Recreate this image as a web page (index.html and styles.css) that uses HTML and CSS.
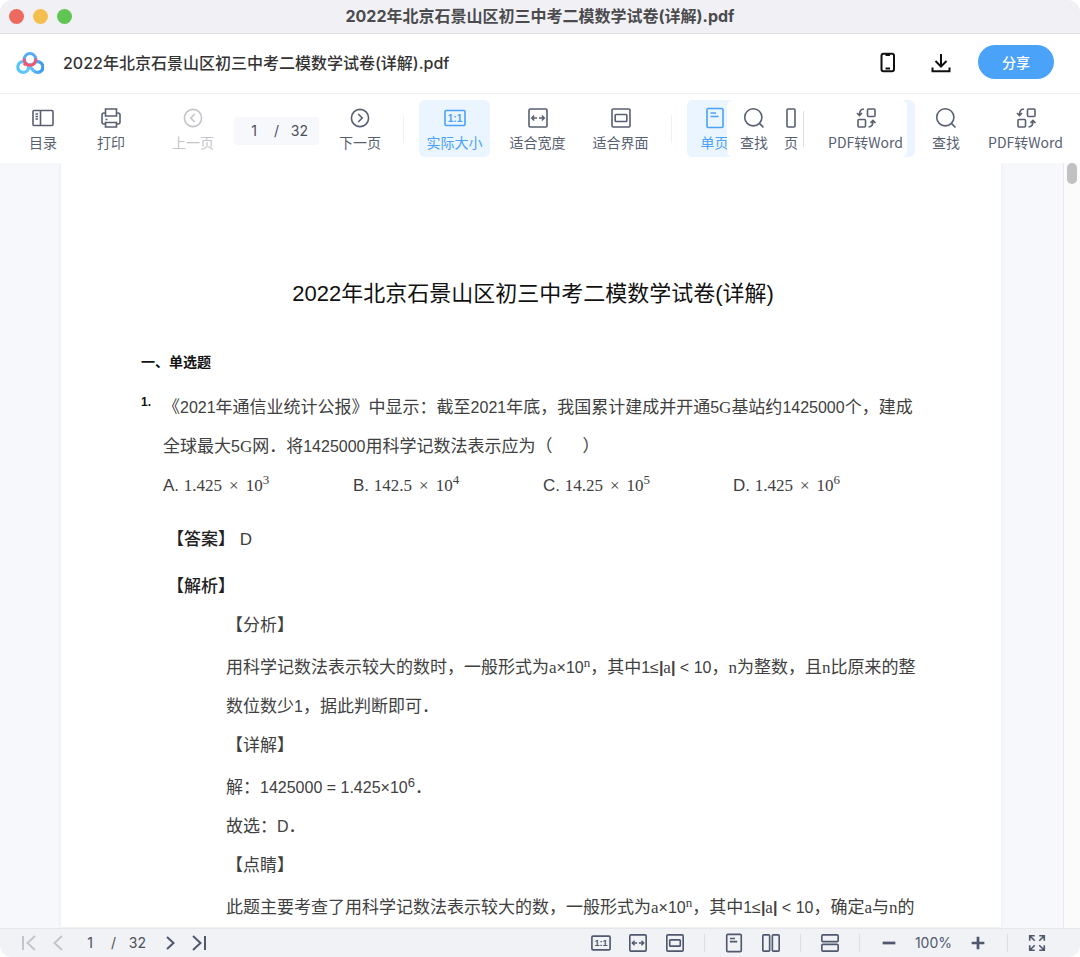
FILE: index.html
```html
<!DOCTYPE html>
<html lang="zh-CN">
<head>
	<meta charset="utf-8">
	<title>2022年北京石景山区初三中考二模数学试卷(详解).pdf</title>
	<link rel="stylesheet" href="styles.css">
</head>
<body>
<svg class="sprite" aria-hidden="true">
	<symbol id="fit-width" viewBox="0 0 22 22">
		<rect x="2" y="2" width="18" height="18" rx="1.2"/>
		<path d="M5 11h5M12 11h5M7.200 8.500 4.700 11l2.500 2.500M14.800 8.500 17.300 11l-2.500 2.500" stroke-width="1.5"/>
	</symbol>
	<symbol id="fit-page" viewBox="0 0 22 22">
		<rect x="2" y="2" width="18" height="18" rx="1.2"/>
		<rect x="5.200" y="7.500" width="11.600" height="7" rx="0.8"/>
	</symbol>
	<symbol id="single" viewBox="0 0 22 22">
		<rect x="3" y="1.500" width="16" height="19" rx="1.2"/>
		<path d="M6.500 6h5.500M6.500 9.500h8"/>
	</symbol>
	<symbol id="double" viewBox="0 0 22 22">
		<rect x="2" y="2" width="7.500" height="18" rx="1"/>
		<rect x="12.500" y="2" width="7.500" height="18" rx="1"/>
	</symbol>
	<symbol id="search" viewBox="0 0 22 22">
		<circle cx="10.300" cy="10.300" r="8.600"/>
		<path d="M16.400 16.400 20.500 20.500"/>
	</symbol>
	<symbol id="convert" viewBox="0 0 22 22">
		<rect x="12.500" y="2" width="7.500" height="7.500" rx="1"/>
		<rect x="3" y="12.500" width="7.500" height="7.500" rx="1"/>
		<path d="M9 2C6 2 4.500 4 4.500 8M2 6l2.500 2.600L7 6M13.500 20c3.500 0 4.500-2 4.500-6M15.500 16l2.500-2.600L20.500 16"/>
	</symbol>
</svg>
<div class="window">
	<div class="title-bar">
		<div class="lights">
			<button class="light red" aria-label="关闭"></button>
			<button class="light yellow" aria-label="最小化"></button>
			<button class="light green" aria-label="最大化"></button>
		</div>
		<div class="window-title">2022年北京石景山区初三中考二模数学试卷(详解).pdf</div>
	</div>
	<header class="header">
		<svg class="logo" viewBox="0 0 28 24">
			<defs>
				<linearGradient id="ring-left" x1="0" x2="1">
					<stop offset="0" stop-color="#5ac3f8"/>
					<stop offset="1" stop-color="#62c8fb"/>
				</linearGradient>
				<linearGradient id="ring-right" x1="0" x2="1">
					<stop offset="0" stop-color="#69c9fb"/>
					<stop offset="1" stop-color="#3798f5"/>
				</linearGradient>
			</defs>
			<circle cx="7.200" cy="16" r="5.400" fill="none" stroke="url(#ring-left)" stroke-width="3.200"/>
			<path d="M17.500 12.400a5.400 5.400 0 1 1 .2 7.500L12.800 14.500" fill="none" stroke="url(#ring-right)" stroke-width="3.200"/>
			<circle cx="14" cy="8.300" r="5.800" fill="#fff" stroke="#55adf9" stroke-width="3"/>
			<path d="M8.300 7.500a5.800 5.800 0 1 0 11.400 0" fill="none" stroke="#ee5672" stroke-width="3"/>
			<path d="M10 12 8 14.200" stroke="#ee5672" stroke-width="3"/>
		</svg>
		<h1 class="file-name">2022年北京石景山区初三中考二模数学试卷(详解).pdf</h1>
		<button class="head-btn" aria-label="手机">
			<svg viewBox="0 0 22 22"><rect x="4.500" y="1.800" width="12.500" height="17.500" rx="2"/><path d="M8.500 3h4.500M8.500 16.500h4.500"/></svg>
		</button>
		<button class="head-btn" aria-label="下载">
			<svg viewBox="0 0 22 22"><path d="M11 2v12M5.500 9l5.500 5.500L16.500 9M2.500 15.500v3.700h17v-3.700"/></svg>
		</button>
		<button class="share">分享</button>
	</header>
	<nav class="toolbar">
		<button class="tool contents">
			<svg class="icon" viewBox="0 0 22 22"><rect x="1" y="3.500" width="20" height="15" rx="1"/><path d="M8.500 3.500v15M3.500 7h2.500M3.500 9.500h2.500M3.500 12h2.500"/></svg>
			<span>目录</span>
		</button>
		<button class="tool print">
			<svg class="icon" viewBox="0 0 22 22"><path d="M5.500 9V2h11v7zM5.500 6H4a2 2 0 0 0-2 2v7a2 2 0 0 0 2 2h1.500M16.500 6H18a2 2 0 0 1 2 2v7a2 2 0 0 1-2 2h-1.500M5.500 15.500h11V20h-11zM5.500 12.500h2"/></svg>
			<span>打印</span>
		</button>
		<button class="tool turn" disabled>
			<svg class="icon" viewBox="0 0 22 22"><circle cx="11" cy="11" r="8.600"/><path d="M12.800 7 8.800 11l4 4"/></svg>
			<span>上一页</span>
		</button>
		<div class="pager">
			<input type="text" value="1" aria-label="页码"><span>/</span><span>32</span>
		</div>
		<button class="tool turn">
			<svg class="icon" viewBox="0 0 22 22"><circle cx="11" cy="11" r="8.600"/><path d="M9.200 7l4 4-4 4"/></svg>
			<span>下一页</span>
		</button>
		<i class="line"></i>
		<button class="tool zoom active"><svg class="icon" viewBox="0 0 22 22"><rect x="1" y="3.500" width="20" height="15" rx="1.2"/><text x="11" y="14.500">1:1</text></svg><span>实际大小</span></button>
		<button class="tool zoom"><svg class="icon"><use href="#fit-width"/></svg><span>适合宽度</span></button>
		<button class="tool zoom"><svg class="icon"><use href="#fit-page"/></svg><span>适合界面</span></button>
		<i class="line"></i>
		<div class="modes">
			<div class="mode-clip">
				<button class="tool mode active"><svg class="icon"><use href="#single"/></svg><span>单页</span></button>
			</div>
			<div class="mode-panel">
				<button class="tool"><svg class="icon"><use href="#search"/></svg><span>查找</span></button>
				<button class="tool cut" aria-label="双页"><svg class="icon" viewBox="0 0 10 22"><rect x="1" y="2" width="8" height="18" rx="1"/></svg><span>页</span></button>
				<i class="line dark"></i>
				<button class="tool"><svg class="icon"><use href="#convert"/></svg><span>PDF转Word</span></button>
			</div>
		</div>
		<button class="tool find"><svg class="icon"><use href="#search"/></svg><span>查找</span></button>
		<button class="tool"><svg class="icon"><use href="#convert"/></svg><span>PDF转Word</span></button>
	</nav>
	<main class="viewer">
		<article class="paper">
			<h2>2022年北京石景山区初三中考二模数学试卷(详解)</h2>
			<h3>一、单选题</h3>
			<div class="question">
				<b class="number">1.</b>
				<div class="stem">
					<p>《<span class="num">2021</span>年通信业统计公报》中显示：截至<span class="num">2021</span>年底，我国累计建成并开通<span class="num">5<span class="serif">G</span></span>基站约<span class="num">1425000</span>个，建成<br>全球最大<span class="num">5<span class="serif">G</span></span>网．将<span class="num">1425000</span>用科学记数法表示应为（<span class="blank"></span>）</p>
					<ul class="options">
						<li>A. <span class="math">1.425<i>×</i>10<sup>3</sup></span></li>
						<li>B. <span class="math">142.5<i>×</i>10<sup>4</sup></span></li>
						<li>C. <span class="math">14.25<i>×</i>10<sup>5</sup></span></li>
						<li>D. <span class="math">1.425<i>×</i>10<sup>6</sup></span></li>
					</ul>
				</div>
			</div>
			<p class="answer"><strong>【答案】</strong> D</p>
			<p class="answer"><strong>【解析】</strong></p>
			<div class="analysis">
				<p>【分析】</p>
				<p class="power">用科学记数法表示较大的数时，一般形式为<span class="num"><span class="serif">a</span>×10<sup class="serif">n</sup></span>，其中<span class="num">1≤<b>|</b><span class="serif">a</span><b>|</b> &lt; 10</span>，<span class="serif">n</span>为整数，且<span class="serif">n</span>比原来的整<br>数位数少<span class="num">1</span>，据此判断即可．</p>
				<p>【详解】</p>
				<p class="power">解：<span class="num">1425000 = 1.425×10<sup>6</sup></span>．</p>
				<p>故选：<span class="num">D</span>．</p>
				<p>【点睛】</p>
				<p class="power">此题主要考查了用科学记数法表示较大的数，一般形式为<span class="num"><span class="serif">a</span>×10<sup class="serif">n</sup></span>，其中<span class="num">1≤<b>|</b><span class="serif">a</span><b>|</b> &lt; 10</span>，确定<span class="serif">a</span>与<span class="serif">n</span>的</p>
			</div>
		</article>
		<div class="scroll"><div class="thumb"></div></div>
	</main>
	<footer class="status">
		<button class="step" aria-label="第一页" disabled><svg viewBox="0 0 16 16"><path d="M2 1v14M14 1 6.500 8l7.500 7"/></svg></button>
		<button class="step" aria-label="上一页" disabled><svg viewBox="0 0 16 16"><path d="M12 1 4.500 8l7.500 7"/></svg></button>
		<div class="pager small">
			<input type="text" value="1" aria-label="当前页"><span>/</span><span>32</span>
		</div>
		<button class="step" aria-label="下一页"><svg viewBox="0 0 16 16"><path d="M5 2l6.500 6L5 14"/></svg></button>
		<button class="step" aria-label="最后一页"><svg viewBox="0 0 16 16"><path d="M14 1v14M2 1l7.500 7L2 15"/></svg></button>
		<div class="views">
			<button aria-label="实际大小"><svg viewBox="0 0 22 22"><rect x="1" y="3.500" width="20" height="15" rx="1.2"/><text x="11" y="14.500">1:1</text></svg></button>
			<button aria-label="适合宽度"><svg><use href="#fit-width"/></svg></button>
			<button aria-label="适合界面"><svg><use href="#fit-page"/></svg></button>
			<i class="line dark"></i>
			<button aria-label="单页"><svg><use href="#single"/></svg></button>
			<button aria-label="双页"><svg><use href="#double"/></svg></button>
			<i class="line dark"></i>
			<button aria-label="连续"><svg viewBox="0 0 22 22"><rect x="2" y="2" width="18" height="7.500" rx="1.200"/><rect x="2" y="12.500" width="18" height="7.500" rx="1.200"/></svg></button>
			<i class="line dark"></i>
			<button class="bold" aria-label="缩小"><svg viewBox="0 0 22 22"><path d="M4 11h14"/></svg></button>
			<span class="percent">100%</span>
			<button class="bold" aria-label="放大"><svg viewBox="0 0 22 22"><path d="M4 11h14M11 4v14"/></svg></button>
			<i class="line dark"></i>
			<button aria-label="全屏"><svg viewBox="0 0 22 22"><path d="M3 8.500V3h5.500M3 3l5.500 5.500M13.500 3H19v5.500M19 3l-5.500 5.500M3 13.500V19h5.500M3 19l5.500-5.500M13.500 19H19v-5.500M19 19l-5.500-5.500"/></svg></button>
		</div>
	</footer>
</div>
</body>
</html>
```
FILE: styles.css
```css
*{
	margin: 0;
	padding: 0;
	box-sizing: border-box;
	list-style: none;
}
body{
	background: #fff;
	font-family: "Liberation Sans", "Noto Sans CJK SC", sans-serif;
	color: #333;
}
button, input{
	font: inherit;
	color: inherit;
	background: none;
	border: none;
	outline: none;
}
button{
	cursor: pointer;
}
svg{
	display: block;
	fill: none;
	stroke: currentColor;
	stroke-width: 1.6;
}
svg text{
	font: bold 10px "Liberation Sans", sans-serif;
	text-anchor: middle;
	fill: currentColor;
	stroke: none;
}
.sprite{
	position: absolute;
	width: 0;
	height: 0;
}
.window{
	height: 100vh;
	display: flex;
	flex-direction: column;
	border-radius: 12px;
	overflow: hidden;
}
.title-bar{
	height: 34px;
	flex: none;
	display: grid;
	grid-template-columns: 1fr auto 1fr;
	align-items: center;
	padding: 0 9px;
	background: #f1f1f5;
	border-bottom: 1px solid #dfdfe2;
}
.lights{
	display: flex;
	gap: 9px;
}
.light{
	width: 15px;
	height: 15px;
	border-radius: 50%;
}
.red{
	background: #ed6a5e;
}
.yellow{
	background: #f5bf4f;
}
.green{
	background: #61c554;
}
.window-title{
	padding-bottom: 2px;
	font: bold 16px/30px Inter, "Noto Sans CJK SC", sans-serif;
	color: #4b4b4e;
}
.header{
	height: 60px;
	flex: none;
	display: flex;
	align-items: center;
	padding: 0 26px 2px 16px;
	border-bottom: 1px solid #eeeff1;
}
.logo{
	width: 28px;
	height: 24px;
}
.file-name{
	flex: 1;
	margin-left: 19px;
	font: 500 16px/24px Inter, "Noto Sans CJK SC", sans-serif;
	color: #333;
}
.head-btn{
	margin-right: 31px;
	color: #111;
}
.head-btn svg{
	width: 22px;
	height: 22px;
	stroke-width: 2;
}
.head-btn + .share{
	margin-left: -5px;
}
.share{
	width: 76px;
	height: 34px;
	margin-bottom: 2px;
	border-radius: 17px;
	background: #4aa2f9;
	color: #fff;
	font: 500 14px/34px "Noto Sans CJK SC", sans-serif;
}
.toolbar{
	height: 69px;
	flex: none;
	display: flex;
	align-items: center;
	padding: 0 17px 0 15px;
	font: 14px/20px "Noto Sans CJK SC", sans-serif;
	color: #575f72;
	white-space: nowrap;
}
.tool{
	height: 57px;
	display: flex;
	flex: none;
	flex-direction: column;
	align-items: center;
	gap: 3px;
	padding-top: 7px;
	border-radius: 6px;
}
.tool:disabled{
	color: #c3c5ca;
}
.tool.active{
	background: #ebf5ff;
	color: #4aa2f9;
}
.icon{
	width: 22px;
	height: 22px;
}
.contents{
	width: 56px;
}
.print{
	width: 56px;
	margin: 0 13px 0 12px;
}
.turn{
	width: 82px;
}
.pager{
	width: 85px;
	height: 28px;
	display: flex;
	align-items: center;
	flex: none;
	justify-content: space-between;
	padding: 0 11px 0 12px;
	border-radius: 4px;
	background: #f7f8fc;
	font-family: Inter, sans-serif;
	color: #4b4f59;
}
.turn + .pager{
	margin-top: 4px;
}
.pager input{
	width: 16px;
	text-align: center;
}
.line{
	width: 1px;
	height: 28px;
	flex: none;
	background: #eff0f3;
}
.line.dark{
	background: #dcdee3;
}
.turn + .line{
	margin-left: 2px;
}
.zoom{
	width: 71px;
	margin-right: 12px;
}
.line + .zoom{
	margin-left: 15px;
}
.zoom + .line{
	margin-left: 3px;
}
/* page mode buttons with the floating panel in front */
.modes{
	display: flex;
	flex: none;
	margin-left: 15px;
	padding-right: 8px;
	border-radius: 6px;
	background: #ebf5ff;
}
.mode-clip{
	width: 40px;
	overflow: hidden;
}
.mode{
	width: 55px;
}
.mode-panel{
	display: flex;
	align-items: center;
	width: 180px;
	padding: 0 4px 0 13px;
	border-radius: 6px;
	background: #fff;
}
.cut{
	width: 14px;
	margin: 0 5px 0 16px;
}
.cut .icon{
	width: 10px;
}
.mode-panel .dark{
	height: 36px;
	margin-right: auto;
}
.find{
	margin: 0 auto 0 17px;
}
.viewer{
	flex: 1;
	min-height: 0;
	display: flex;
	overflow: hidden;
	background: #f7f8fc;
}
.paper{
	flex: 1;
	align-self: flex-start;
	margin: 0 62px 0 61px;
	padding: 111px 76px 0 80px;
	background: #fff;
	box-shadow: 0 0 4px #e6e8ef;
	font-size: 17px;
	line-height: 39px;
	color: #404040;
	white-space: nowrap;
}
.paper h2{
	font-size: 22px;
	font-weight: normal;
	line-height: 40px;
	text-align: center;
	color: #111;
}
.paper h3{
	margin-top: 36px;
	font-size: 14px;
	line-height: 24px;
	color: #111;
}
.question{
	display: flex;
	margin-top: 14px;
}
.number{
	width: 22px;
	font-size: 12px;
	line-height: 28px;
	color: #111;
}
.stem{
	flex: 1;
}
.num{
	font-size: 16px;
}
.serif{
	font-family: "Liberation Serif", serif;
	font-size: 17px;
}
sup{
	font-size: 13px;
	line-height: 0;
}
sup.serif{
	font-size: 13px;
}
.blank{
	display: inline-block;
	width: 30px;
}
.options{
	display: flex;
}
.options li{
	width: 190px;
}
.math{
	font-family: "Liberation Serif", serif;
}
.math i{
	font-style: normal;
	margin: 0 7px;
}
.answer{
	margin: 15px 0 0 26px;
}
.answer strong{
	font-weight: 500;
	color: #222;
}
.answer + .answer{
	margin-top: 8px;
}
.analysis{
	margin-left: 85px;
}
.power{
	margin-top: 3px;
}
.scroll{
	width: 17px;
	flex: none;
	padding: 0 3px;
	background: #fbfbfb;
	border-left: 1px solid #e9e9ec;
}
.thumb{
	height: 21px;
	border-radius: 5px;
	background: #c1c1c3;
}
.status{
	height: 29px;
	flex: none;
	display: flex;
	align-items: center;
	padding: 0 33px 0 21px;
	border-top: 1px solid #e6e7eb;
	background: #f1f2f6;
	font: 14px/20px Inter, sans-serif;
	color: #4f586c;
}
.step{
	margin-right: 13px;
}
.step svg{
	width: 16px;
	height: 16px;
	stroke-width: 2;
}
.step:disabled{
	color: #c3c5ca;
}
.small{
	width: 67px;
	margin-right: 16px;
	padding: 0 0 0 3px;
	background: none;
}
.views{
	display: flex;
	flex: none;
	align-items: center;
	gap: 17px;
	margin-left: auto;
}
.views svg{
	width: 20px;
	height: 20px;
	stroke-width: 1.8;
}
.views .line{
	height: 18px;
	margin: 0 2px;
}
.views .bold svg{
	stroke-width: 3;
}
.percent{
	margin: 0 -1px;
}
```
